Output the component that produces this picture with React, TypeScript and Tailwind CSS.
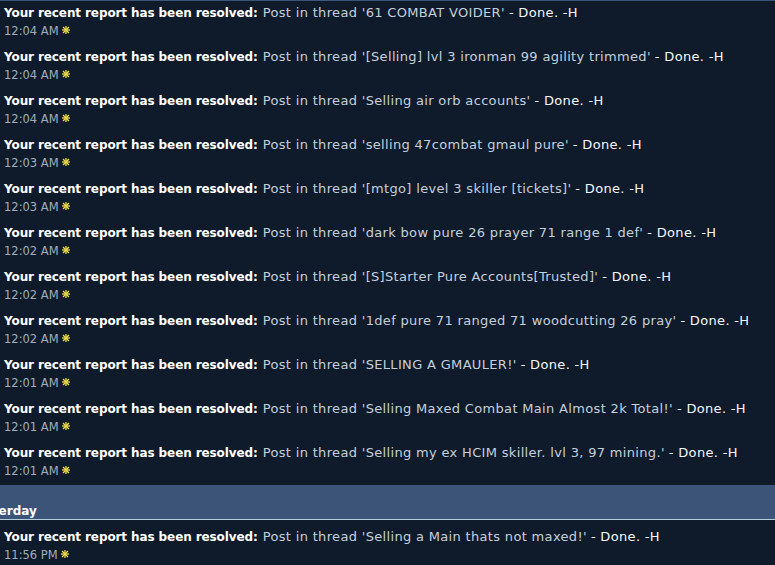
import React from "react";

type Report = {
  thread: string;
  time: string;
};

const today: Report[] = [
  { thread: "61 COMBAT VOIDER", time: "12:04 AM" },
  { thread: "[Selling] lvl 3 ironman 99 agility trimmed", time: "12:04 AM" },
  { thread: "Selling air orb accounts", time: "12:04 AM" },
  { thread: "selling 47combat gmaul pure", time: "12:03 AM" },
  { thread: "[mtgo] level 3 skiller [tickets]", time: "12:03 AM" },
  { thread: "dark bow pure 26 prayer 71 range 1 def", time: "12:02 AM" },
  { thread: "[S]Starter Pure Accounts[Trusted]", time: "12:02 AM" },
  { thread: "1def pure 71 ranged 71 woodcutting 26 pray", time: "12:02 AM" },
  { thread: "SELLING A GMAULER!", time: "12:01 AM" },
  { thread: "Selling Maxed Combat Main Almost 2k Total!", time: "12:01 AM" },
  { thread: "Selling my ex HCIM skiller. lvl 3, 97 mining.", time: "12:01 AM" },
];

const yesterday: Report[] = [
  { thread: "Selling a Main thats not maxed!", time: "11:56 PM" },
];

const Star = () => (
  <svg width="8" height="8" viewBox="0 0 8 8" className="ml-[3px] mt-[-2px]">
    <g stroke="#eedd44" strokeWidth="1.3" strokeLinecap="square">
      <line x1="4" y1="0.5" x2="4" y2="7.5" />
      <line x1="0.5" y1="4" x2="7.5" y2="4" />
      <line x1="1.5" y1="1.5" x2="6.5" y2="6.5" />
      <line x1="6.5" y1="1.5" x2="1.5" y2="6.5" />
    </g>
  </svg>
);

const ReportRow = ({ thread, time }: Report) => (
  <div className="pl-1 pt-[2px] pb-[6px] whitespace-nowrap">
    <div className="h-[19px] flex items-baseline text-[13px] leading-[19px]">
      <span className="font-bold text-[12px] tracking-[-0.1px] text-white">
        Your recent report has been resolved:
      </span>
      <span className="ml-[5px] tracking-[0.33px] text-[#c5cfdc]">
        Post in thread '{thread}'
      </span>
      <span className="ml-[4px] tracking-[0.33px] text-[#f4f7fb]">
        - Done. -H
      </span>
    </div>
    <div className="h-[17px] pt-[1px] flex items-center text-[11.5px] leading-[16px] text-[#a3adb9]">
      <span>{time}</span>
      <Star />
    </div>
  </div>
);

export default function App() {
  return (
    <div
      className="w-[775px] h-[565px] overflow-hidden bg-[#0f1b2b]"
      style={{ fontFamily: '"DejaVu Sans", Verdana, sans-serif' }}
    >
      <div className="h-px bg-[#3b5478]" />
      {today.map((r, i) => (
        <ReportRow key={i} {...r} />
      ))}
      <div className="h-[35px] bg-[#3b5478] flex items-end border-b border-[#b4d0de] whitespace-nowrap">
        <span className="ml-[-30px] text-[12px] font-bold leading-[16px] text-white">
          Yesterday
        </span>
      </div>
      <div className="mt-[5px]">
        {yesterday.map((r, i) => (
          <ReportRow key={i} {...r} />
        ))}
      </div>
    </div>
  );
}
